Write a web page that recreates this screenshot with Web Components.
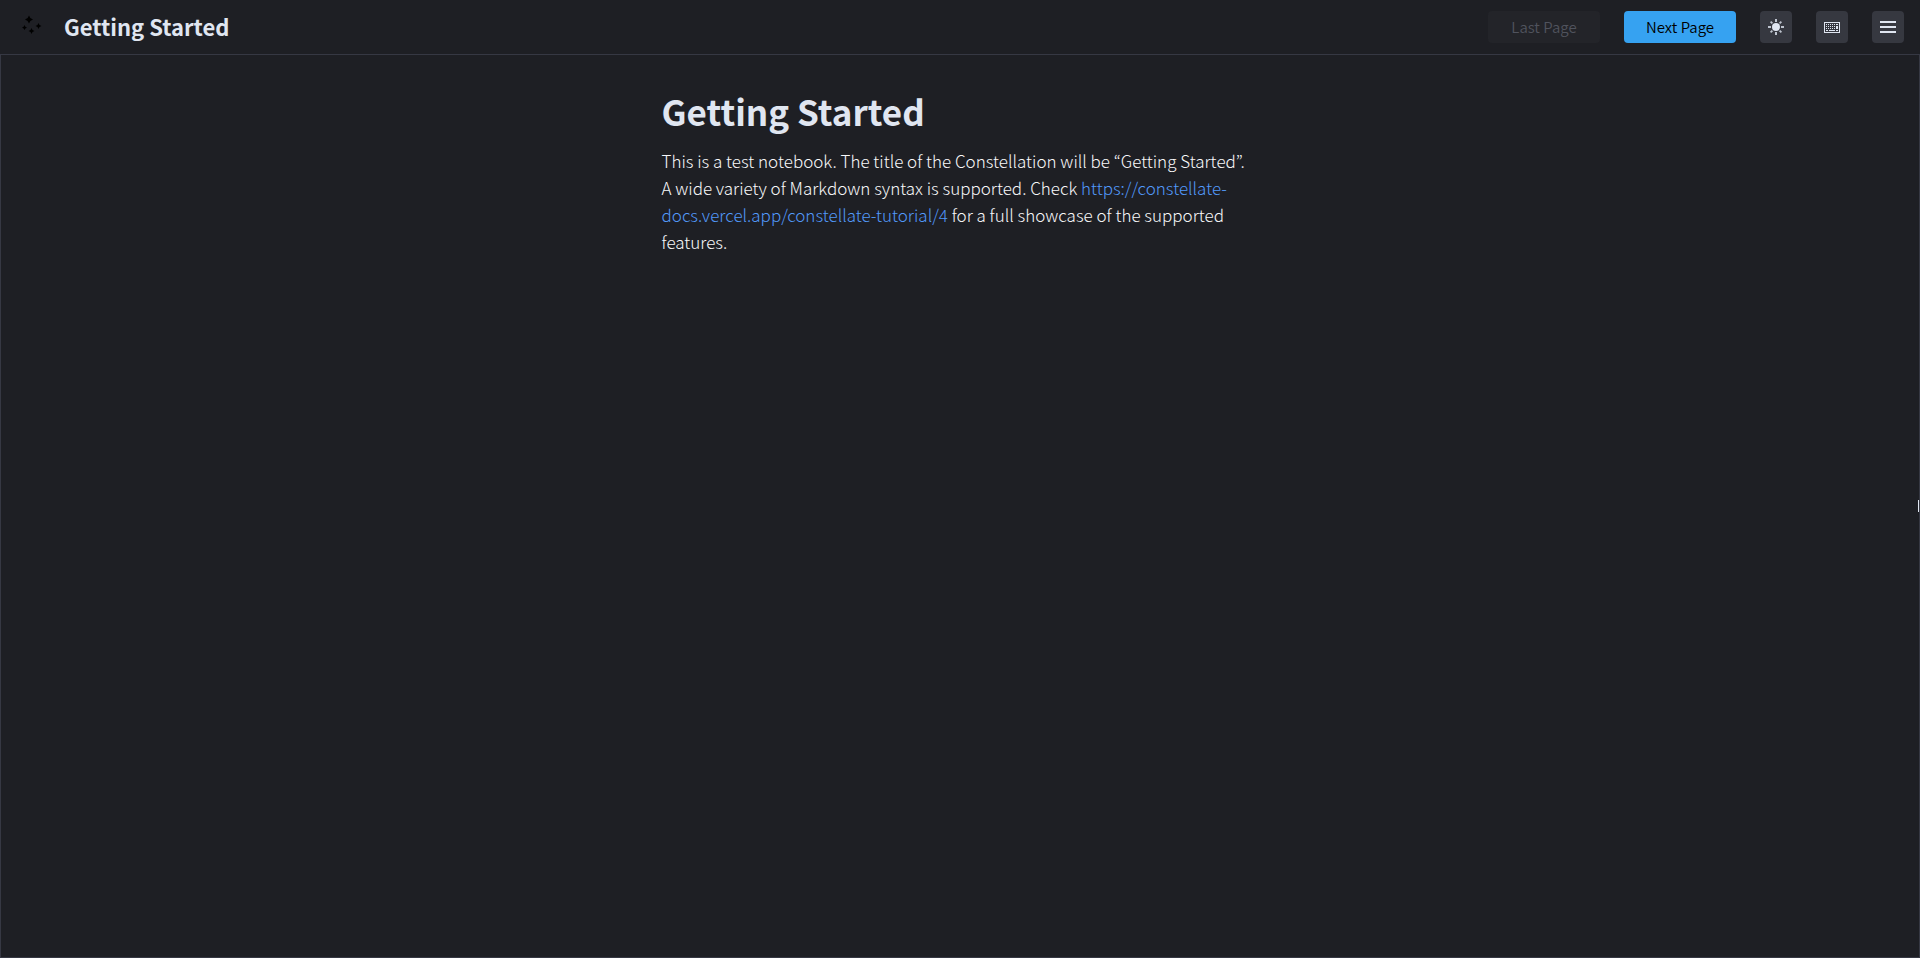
<!DOCTYPE html>
<html lang="en">
<head>
<meta charset="utf-8">
<meta name="viewport" content="width=device-width, initial-scale=1">
<title>Getting Started</title>
<style>
  :root {
    --bg: #1e1f24;
    --border: #363843;
    --surface: #363840;
    --text: #e0e6f1;
    --accent: #36a2f1;
    --link: #5299fa;
  }
  body {
    margin: 0;
    background: var(--bg);
    color: var(--text);
    font-family: "Noto Sans CJK KR", "Noto Sans", sans-serif;
  }
</style>
</head>
<body>
<notebook-app>
  <top-bar slot="header" heading="Getting Started">
    <page-button disabled>Last Page</page-button>
    <page-button primary>Next Page</page-button>
    <icon-button icon="sun" label="Toggle theme"></icon-button>
    <icon-button icon="keyboard" label="Keyboard shortcuts"></icon-button>
    <icon-button icon="menu" label="Menu"></icon-button>
  </top-bar>
  <note-page heading="Getting Started">
    This is a test notebook. The title of the Constellation will be “Getting Started”. A wide variety of Markdown syntax is supported. Check <note-link href="https://constellate-docs.vercel.app/constellate-tutorial/4">https://constellate-docs.vercel.app/constellate-tutorial/4</note-link> for a full showcase of the supported features.
  </note-page>
</notebook-app>

<script>
const icons = {
  sun: /* html */ `
    <svg viewBox="0 0 16 16" width="16" height="16" fill="currentColor" aria-hidden="true">
      <circle cx="8" cy="8" r="4"/>
      <path d="M7 0h2v3H7zM7 13h2v3H7zM0 7h3v2H0zM13 7h3v2h-3z" opacity=".8"/>
      <path d="M2.6 2.6l1.8 1.8M11.6 11.6l1.8 1.8M2.6 13.4l1.8-1.8M11.6 4.4l1.8-1.8" stroke="currentColor" stroke-width="1.8" opacity=".8"/>
    </svg>`,
  keyboard: /* html */ `
    <svg viewBox="0 0 16 16" width="16" height="16" fill="currentColor" shape-rendering="crispEdges" aria-hidden="true">
      <path fill-rule="evenodd" d="M0 3h16v11H0zM1 4v9h14V4z"/>
      <path d="M2 5h1v1H2zM4 5h1v1H4zM6 5h1v1H6zM8 5h1v1H8zM10 5h1v1h-1zM12 5h2v1h-2z"/>
      <path d="M2 7h1v1H2zM4 7h1v1H4zM6 7h1v1H6zM8 7h1v1H8zM10 7h1v1h-1zM12 7h2v3h-2z"/>
      <path d="M2 9h1v1H2zM4 9h1v1H4zM6 9h1v1H6zM8 9h1v1H8zM10 9h1v1h-1z"/>
      <path d="M2 11h2v1H2zM5 11h6v1H5zM12 11h2v1h-2z"/>
    </svg>`,
  menu: /* html */ `
    <svg viewBox="0 0 16 16" width="16" height="16" fill="currentColor" aria-hidden="true">
      <path d="M0 2h16v2H0zM0 7h16v2H0zM0 12h16v2H0z"/>
    </svg>`
};

class NotebookApp extends HTMLElement {
  constructor() {
    super();
    this.attachShadow({ mode: 'open' });
    this.shadowRoot.innerHTML = /* html */ `
    <style>
      :host {
        display: flex;
        flex-direction: column;
        min-height: 100vh;
      }
      main {
        flex: 1;
        display: flex;
        border: 1px solid var(--border);
      }
      .page {
        flex: 1;
        min-width: 0;
      }
      .handle {
        align-self: center;
        width: 1px;
        height: 12px;
        background: var(--text);
      }
    </style>
    <slot name="header"></slot>
    <main>
      <div class="page"><slot></slot></div>
      <div class="handle"></div>
    </main>
    `;
  }
}
customElements.define('notebook-app', NotebookApp);

class TopBar extends HTMLElement {
  constructor() {
    super();
    this.attachShadow({ mode: 'open' });
    this.shadowRoot.innerHTML = /* html */ `
    <style>
      :host {
        display: block;
      }
      header {
        display: flex;
        align-items: center;
        gap: 24px;
        height: 54px;
        padding: 0 16px;
      }
      .brand {
        display: flex;
        gap: 16px;
        margin-right: auto;
      }
      .logo {
        display: block;
        color: #000;
      }
      h2 {
        margin: 0;
        font-size: 22px;
        line-height: 30px;
        font-weight: 700;
        white-space: nowrap;
      }
    </style>
    <header>
      <div class="brand">
        <svg class="logo" viewBox="0 0 32 32" width="32" height="32" fill="currentColor" aria-hidden="true">
          <path d="M13 4.500q.8 3.200 4 4q-3.200.8-4 4q-.8-3.200-4-4q3.200-.8 4-4z"/>
          <path d="M22.500 12q.5 2.500 3 3q-2.500.5-3 3q-.5-2.500-3-3q2.500-.5 3-3z"/>
          <path d="M15.500 17q.5 2.500 3 3q-2.500.5-3 3q-.5-2.500-3-3q2.500-.5 3-3z"/>
          <path d="M8.500 14q.5 2 2.500 2.500q-2 .5-2.500 2.500q-.5-2-2.500-2.500q2-.5 2.500-2.500z"/>
        </svg>
        <h2></h2>
      </div>
      <slot></slot>
    </header>
    `;
  }
  connectedCallback() {
    this.shadowRoot.querySelector('h2').textContent = this.getAttribute('heading');
  }
}
customElements.define('top-bar', TopBar);

class PageButton extends HTMLElement {
  constructor() {
    super();
    this.attachShadow({ mode: 'open' });
    this.shadowRoot.innerHTML = /* html */ `
    <style>
      :host {
        display: block;
      }
      button {
        display: block;
        width: 112px;
        height: 32px;
        padding: 0;
        border: 0;
        border-radius: 4px;
        background: #232429;
        color: #50535d;
        font-family: inherit;
        font-size: 15px;
        font-weight: 350;
        line-height: 32px;
        cursor: pointer;
      }
      :host([primary]) button {
        background: var(--accent);
        color: #000;
      }
      button:disabled {
        cursor: default;
      }
    </style>
    <button type="button"><slot></slot></button>
    `;
  }
  connectedCallback() {
    this.shadowRoot.querySelector('button').disabled = this.hasAttribute('disabled');
  }
}
customElements.define('page-button', PageButton);

class IconButton extends HTMLElement {
  constructor() {
    super();
    this.attachShadow({ mode: 'open' });
    this.shadowRoot.innerHTML = /* html */ `
    <style>
      :host {
        display: block;
      }
      button {
        display: flex;
        align-items: center;
        justify-content: center;
        width: 32px;
        height: 32px;
        padding: 0;
        border: 0;
        border-radius: 4px;
        background: var(--surface);
        color: var(--text);
        cursor: pointer;
      }
    </style>
    <button type="button"></button>
    `;
  }
  connectedCallback() {
    const button = this.shadowRoot.querySelector('button');
    button.innerHTML = icons[this.getAttribute('icon')];
    button.setAttribute('aria-label', this.getAttribute('label'));
  }
}
customElements.define('icon-button', IconButton);

class NoteLink extends HTMLElement {
  constructor() {
    super();
    this.attachShadow({ mode: 'open' });
    this.shadowRoot.innerHTML = /* html */ `
    <style>
      :host {
        display: inline;
      }
      a {
        color: var(--link);
        text-decoration: none;
      }
      a:hover {
        text-decoration: underline;
      }
    </style>
    <a><slot></slot></a>`;
  }
  connectedCallback() {
    this.shadowRoot.querySelector('a').href = this.getAttribute('href');
  }
}
customElements.define('note-link', NoteLink);

class NotePage extends HTMLElement {
  constructor() {
    super();
    this.attachShadow({ mode: 'open' });
    this.shadowRoot.innerHTML = /* html */ `
    <style>
      :host {
        display: block;
      }
      article {
        max-width: 596px;
        margin: 0 auto;
        padding: 32px 0;
      }
      h1 {
        margin: 0 0 12px;
        font-size: 35px;
        line-height: 48px;
        font-weight: 700;
      }
      p {
        margin: 0;
        color: #f8f8fa;
        font-size: 17px;
        font-weight: 300;
        line-height: 27px;
      }
    </style>
    <article>
      <h1></h1>
      <p><slot></slot></p>
    </article>
    `;
  }
  connectedCallback() {
    this.shadowRoot.querySelector('h1').textContent = this.getAttribute('heading');
  }
}
customElements.define('note-page', NotePage);
</script>
</body>
</html>
